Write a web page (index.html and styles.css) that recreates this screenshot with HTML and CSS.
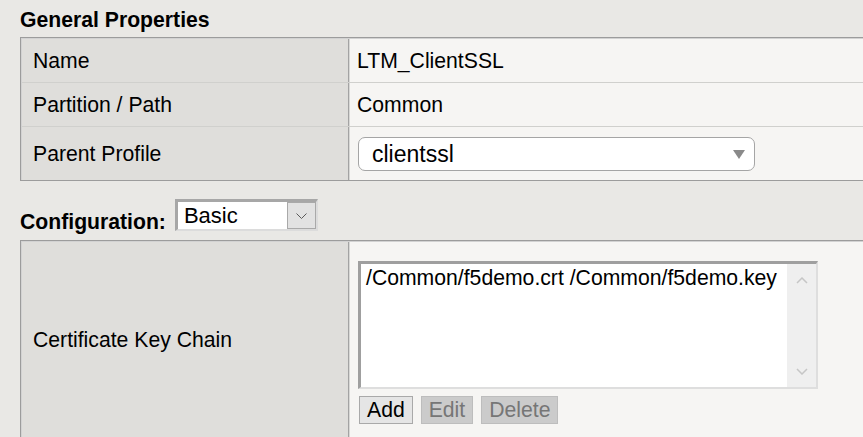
FILE: index.html
```html
<!DOCTYPE html>
<html lang="en">
<head>
<meta charset="utf-8">
<title>LTM_ClientSSL</title>
<link rel="stylesheet" href="styles.css">
</head>
<body>
<div class="page">
  <h2 class="section-title">General Properties</h2>
  <div class="props">
    <div class="row row-name">
      <div class="label">Name</div>
      <div class="value">LTM_ClientSSL</div>
    </div>
    <div class="row row-path">
      <div class="label">Partition / Path</div>
      <div class="value">Common</div>
    </div>
    <div class="row row-parent">
      <div class="label">Parent Profile</div>
      <div class="value">
        <div class="parent-select">
          <span class="parent-text">clientssl</span>
          <svg class="parent-arrow" width="12" height="9" viewBox="0 0 12 9"><polygon points="0,0 12,0 6,9" fill="#8a8a8a"/></svg>
        </div>
      </div>
    </div>
  </div>

  <div class="config">
    <span class="config-label">Configuration:</span>
    <div class="mode-select">
      <span class="mode-value">Basic</span>
      <span class="mode-btn">
        <svg width="11" height="6" viewBox="0 0 11 6"><polyline points="0.5,0.5 5.5,5.5 10.5,0.5" fill="none" stroke="#5a5a5a" stroke-width="1"/></svg>
      </span>
    </div>
  </div>

  <div class="props">
    <div class="row row-chain">
      <div class="label">Certificate Key Chain</div>
      <div class="value value-stack">
        <div class="listbox">
          <div class="list-text">/Common/f5demo.crt /Common/f5demo.key</div>
          <div class="scrollbar">
            <svg width="12" height="7" viewBox="0 0 12 7"><polyline points="1,6 6,1 11,6" fill="none" stroke="#c6c6c6" stroke-width="1.5"/></svg>
            <svg width="12" height="7" viewBox="0 0 12 7"><polyline points="1,1 6,6 11,1" fill="none" stroke="#c6c6c6" stroke-width="1.5"/></svg>
          </div>
        </div>
        <div class="btns">
          <button class="btn">Add</button>
          <button class="btn btn-disabled">Edit</button>
          <button class="btn btn-disabled">Delete</button>
        </div>
      </div>
    </div>
  </div>
</div>
</body>
</html>
```
FILE: styles.css
```css
html, body {
  margin: 0;
  padding: 0;
  overflow: hidden;
}
body {
  background: #e9e8e5;
  font-family: "Liberation Sans", Arial, sans-serif;
  font-size: 21.2px;
  line-height: 24px;
  color: #000;
}
.page {
  padding-left: 20px;
  width: 880px;
}
.section-title {
  margin: 0;
  padding-top: 7.5px;
  height: 37px;
  box-sizing: border-box;
  font-size: 21.2px;
  line-height: 24px;
  font-weight: bold;
}
.props {
  border: 1px solid #9c9c9c;
  border-right: none;
  padding: 1px 0 0 1px;
  background: #d2d2d2;
}
.row {
  display: grid;
  grid-template-columns: 327px 1fr;
  box-sizing: border-box;
}
.row-name, .row-path {
  height: 44px;
  border-bottom: 1px solid #d0d0cd;
}
.row-parent {
  height: 53px;
}
.label {
  background: #dfdedb;
  border-right: 1px solid #a3a3a3;
  padding-left: 11px;
  display: flex;
  align-items: center;
}
.value {
  background: #f6f5f3;
  border-left: 1px solid #d8d8d6;
  padding-left: 7px;
  display: flex;
  align-items: center;
}
.parent-select {
  margin-left: 1px;
  width: 397px;
  height: 34px;
  box-sizing: border-box;
  border: 1px solid #a5a5a5;
  border-radius: 7px;
  background: #fff;
  display: flex;
  align-items: center;
  justify-content: space-between;
  padding: 0 9px 0 13px;
}
.parent-text {
  font-size: 23px;
  line-height: 26px;
}
.parent-arrow {
  display: block;
  margin-top: 1px;
}
.config {
  display: flex;
  align-items: flex-start;
  height: 59px;
}
.config-label {
  margin-top: 29px;
  font-weight: bold;
}
.mode-select {
  margin-top: 18px;
  margin-left: 9px;
  width: 143px;
  height: 32px;
  box-sizing: border-box;
  border-style: solid;
  border-width: 3px 2px 2px 3px;
  border-color: #a7a7a7 #dcdcdc #dcdcdc #a7a7a7;
  display: flex;
  background: #fff;
}
.mode-value {
  flex: 1;
  font-size: 22px;
  padding-left: 6px;
  display: flex;
  align-items: center;
}
.mode-btn {
  width: 29px;
  box-sizing: border-box;
  border: 1px solid #a9a9a9;
  background: #e2e2e2;
  display: flex;
  align-items: center;
  justify-content: center;
}
.mode-btn svg {
  display: block;
}
.row-chain {
  height: 196px;
}
.value-stack {
  flex-direction: column;
  align-items: flex-start;
  justify-content: flex-start;
  padding-top: 19px;
}
.listbox {
  margin-left: 1px;
  width: 460px;
  height: 128px;
  box-sizing: border-box;
  border-style: solid;
  border-width: 3px 2px 2px 3px;
  border-color: #9f9f9f #dedede #dedede #9f9f9f;
  background: #fff;
  display: flex;
}
.list-text {
  flex: 1;
  padding: 2px 0 0 5px;
  white-space: nowrap;
}
.scrollbar {
  width: 29px;
  background: #efefef;
  display: flex;
  flex-direction: column;
  align-items: center;
  justify-content: space-between;
  padding: 13px 0 12px;
}
.scrollbar svg {
  display: block;
}
.btns {
  margin-top: 7px;
  margin-left: 2px;
  display: flex;
  gap: 8px;
}
.btn {
  font-family: "Liberation Sans", Arial, sans-serif;
  font-size: 21.2px;
  line-height: 24px;
  height: 28px;
  box-sizing: border-box;
  padding: 1px 7px;
  margin: 0;
  border: 1px solid #a9a9a9;
  background: #e5e5e5;
  color: #000;
  border-radius: 0;
}
.btn-disabled {
  background: #cbcbcb;
  border-color: #bdbdbd;
  color: #767676;
}
```
